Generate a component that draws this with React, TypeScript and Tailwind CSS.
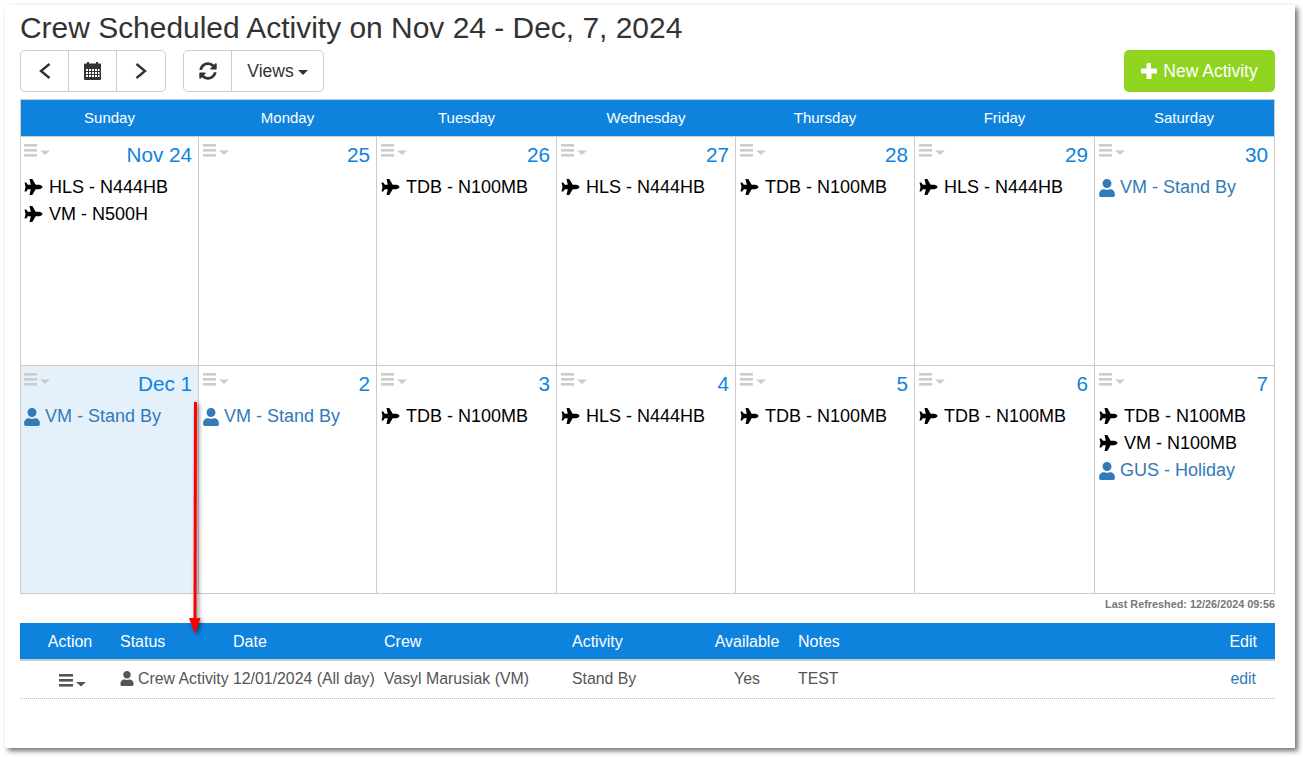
import { FaUser, FaSyncAlt } from 'react-icons/fa';

type CalEvent = { label: string; kind: 'flight' | 'crew' };

interface Day {
    date: string;
    events: CalEvent[];
    today?: boolean;
}

const f = (label: string): CalEvent => ({ label, kind: 'flight' });
const c = (label: string): CalEvent => ({ label, kind: 'crew' });

const weekDays = ['Sunday', 'Monday', 'Tuesday', 'Wednesday', 'Thursday', 'Friday', 'Saturday'];

const days: Day[] = [
    { date: 'Nov 24', events: [f('HLS - N444HB'), f('VM - N500H')] },
    { date: '25', events: [] },
    { date: '26', events: [f('TDB - N100MB')] },
    { date: '27', events: [f('HLS - N444HB')] },
    { date: '28', events: [f('TDB - N100MB')] },
    { date: '29', events: [f('HLS - N444HB')] },
    { date: '30', events: [c('VM - Stand By')] },
    { date: 'Dec 1', events: [c('VM - Stand By')], today: true },
    { date: '2', events: [c('VM - Stand By')] },
    { date: '3', events: [f('TDB - N100MB')] },
    { date: '4', events: [f('HLS - N444HB')] },
    { date: '5', events: [f('TDB - N100MB')] },
    { date: '6', events: [f('TDB - N100MB')] },
    { date: '7', events: [f('TDB - N100MB'), f('VM - N100MB'), c('GUS - Holiday')] },
];

function MenuIcon({ className, large }: { className: string; large?: boolean }) {
    const w = large ? 19 : 17;
    return (
        <svg width={w + 11} height="14" viewBox={`0 0 ${w + 11} 14`} className={className} fill="currentColor">
            <rect x="0" y="0" width={large ? 14 : 13} height="2.6" />
            <rect x="0" y="5" width={large ? 14 : 13} height="2.6" />
            <rect x="0" y="10" width={large ? 14 : 13} height="2.6" />
            <polygon points={large ? '17,8 27,8 22,12.5' : '16,6.5 26,6.5 21,11'} />
        </svg>
    );
}

function PlaneIcon() {
    return (
        <svg width="19" height="16" viewBox="0 0 18 16" className="mb-[1px] shrink-0" fill="currentColor">
            <path d="M18 8C18 6.800 16 5.800 14.500 5.800H11.200L7.800 0H5L6.300 5.800H3.400L1.700 3.600H0L1 8L0 12.400H1.700L3.400 10.200H6.300L5 16H7.800L11.200 10.200H14.500C16 10.200 18 9.200 18 8Z" />
        </svg>
    );
}

function CalendarIcon() {
    return (
        <svg width="17" height="18" viewBox="0 0 17 18">
            <path fill="#333" d="M3 0h2v1.5h7V0h2v1.5h2a1 1 0 0 1 1 1V17a1 1 0 0 1-1 1H1a1 1 0 0 1-1-1V2.500a1 1 0 0 1 1-1h2Z" />
            <g fill="#fff">
                <rect x="2" y="7" width="2" height="2" />
                <rect x="5" y="7" width="2" height="2" />
                <rect x="8" y="7" width="2" height="2" />
                <rect x="11" y="7" width="2" height="2" />
                <rect x="14" y="7" width="1.500" height="2" />
                <rect x="2" y="10" width="2" height="2" />
                <rect x="5" y="10" width="2" height="2" />
                <rect x="8" y="10" width="2" height="2" />
                <rect x="11" y="10" width="2" height="2" />
                <rect x="14" y="10" width="1.500" height="2" />
                <rect x="2" y="13" width="2" height="2" />
                <rect x="5" y="13" width="2" height="2" />
                <rect x="8" y="13" width="2" height="2" />
                <rect x="11" y="13" width="2" height="2" />
                <rect x="14" y="13" width="1.500" height="2" />
            </g>
        </svg>
    );
}

function DayCell({ day, col, row }: { day: Day; col: number; row: number }) {
    return (
        <div className={`border-b border-[#ccc] pr-[6px] pt-[7px] ${row === 0 ? 'h-[229px]' : 'h-[228px]'} ${col === 0 ? 'pl-[3px]' : 'pl-[4px]'} ${col < 6 ? 'border-r' : ''} ${day.today ? 'bg-[#e4f1fb]' : 'bg-white'}`}>
            <div className="flex h-[30px] items-start justify-between">
                <MenuIcon className="text-[#cccccc]" />
                <span className="text-[20.7px] leading-[22px] text-[#0e83de]">{day.date}</span>
            </div>
            {day.events.map((event) =>
                event.kind === 'flight' ? (
                    <div key={event.label} className="flex h-[27px] items-center gap-[6px] text-[18px] text-black">
                        <PlaneIcon />
                        <span>{event.label}</span>
                    </div>
                ) : (
                    <div key={event.label} className="flex h-[27px] items-center gap-[5px] text-[18px] text-[#337ab7]">
                        <FaUser className="h-[18px] w-[16px] shrink-0" />
                        <span>{event.label}</span>
                    </div>
                )
            )}
        </div>
    );
}

export default function App() {
    return (
        <div className="h-[757px] w-[1303px] overflow-hidden bg-white pl-[5px] pt-[5px] font-['Liberation_Sans',Arial,sans-serif] text-[#333]">
            <div className="relative h-[743px] w-[1290px] bg-white pl-[15px] pr-[20px] pt-[6px] shadow-[3px_3px_5px_rgba(0,0,0,0.55)]">
                <h1 className="text-[29.95px] leading-[33px] font-normal">Crew Scheduled Activity on Nov 24 - Dec, 7, 2024</h1>

                <div className="mt-[6px] flex items-start justify-between">
                    <div className="flex gap-[17px]">
                        <div className="flex h-[42px] rounded-[5px] border border-[#ccc]">
                            <button className="flex w-[48px] items-center justify-center border-r border-[#ccc]">
                                <svg width="12" height="16" viewBox="0 0 12 16" fill="none" stroke="#333" strokeWidth="2.4">
                                    <polyline points="10.500,1 2,8 10.500,15" />
                                </svg>
                            </button>
                            <button className="flex w-[48px] items-center justify-center border-r border-[#ccc]">
                                <CalendarIcon />
                            </button>
                            <button className="flex w-[48px] items-center justify-center">
                                <svg width="12" height="16" viewBox="0 0 12 16" fill="none" stroke="#333" strokeWidth="2.4">
                                    <polyline points="1.500,1 10,8 1.500,15" />
                                </svg>
                            </button>
                        </div>
                        <div className="flex h-[42px] rounded-[5px] border border-[#ccc]">
                            <button className="flex w-[48px] items-center justify-center border-r border-[#ccc]">
                                <FaSyncAlt className="h-[18px] w-[18px]" />
                            </button>
                            <button className="flex w-[91px] items-center justify-center gap-[4px] text-[17.5px]">
                                Views
                                <span className="mt-[2px] border-x-[5px] border-t-[5px] border-x-transparent border-t-[#333]" />
                            </button>
                        </div>
                    </div>
                    <button className="flex h-[42px] w-[151px] items-center justify-center gap-[6px] rounded-[5px] bg-[#8fd41f] text-[17.5px] text-white">
                        <svg width="16" height="16" viewBox="0 0 16 16" fill="currentColor">
                            <path d="M6 0.500a.5.5 0 0 1 .5-.5h3a.5.5 0 0 1 .5.5V5.500h5.500a.5.5 0 0 1 .5.5v4a.5.5 0 0 1-.5.5H10.500V15.500a.5.5 0 0 1-.5.5H6a.5.5 0 0 1-.5-.5V10.500H.5A.5.5 0 0 1 0 10V6a.5.5 0 0 1 .5-.5H5.500V.5Z" />
                        </svg>
                        New Activity
                    </button>
                </div>

                <div className="mt-[7px] w-[1255px] border-x border-[#ccc]">
                    <div className="grid h-[38px] grid-cols-[178px_178px_180px_179px_179px_180px_1fr] border-y border-[#ccc] bg-[#0e83de] text-center text-[15px] leading-[36px] text-white">
                        {weekDays.map((name) => (
                            <div key={name} className="pr-[1px]">{name}</div>
                        ))}
                    </div>
                    <div className="grid grid-cols-[178px_178px_180px_179px_179px_180px_1fr]">
                        {days.map((day, i) => (
                            <DayCell key={day.date} day={day} col={i % 7} row={i < 7 ? 0 : 1} />
                        ))}
                    </div>
                </div>

                <div className="mt-[4px] text-right text-[10.85px] leading-[12px] font-bold text-[#777]">Last Refreshed: 12/26/2024 09:56</div>

                <div className="mt-[13px] grid h-[38px] grid-cols-[100px_113px_151px_188px_134px_82px_400px_1fr] items-center border-b-2 border-[#ccc] bg-[#0e83de] pt-[2px] text-[16px] text-white">
                    <div className="text-center">Action</div>
                    <div>Status</div>
                    <div>Date</div>
                    <div>Crew</div>
                    <div>Activity</div>
                    <div className="text-center">Available</div>
                    <div className="pl-[10px]">Notes</div>
                    <div className="pr-[18px] text-right">Edit</div>
                </div>
                <div className="grid h-[38px] grid-cols-[100px_113px_151px_188px_134px_82px_400px_1fr] items-center border-b border-dotted border-[#bbb] pb-[2px] text-[15.85px] text-[#555]">
                    <div className="flex justify-center pl-[7px] pt-[4px]">
                        <MenuIcon className="text-[#555]" large />
                    </div>
                    <div className="flex items-center gap-[4px] whitespace-nowrap">
                        <FaUser className="h-[15px] w-[14px] shrink-0" />
                        Crew Activity
                    </div>
                    <div className="whitespace-nowrap">12/01/2024 (All day)</div>
                    <div>Vasyl Marusiak (VM)</div>
                    <div>Stand By</div>
                    <div className="text-center">Yes</div>
                    <div className="pl-[10px]">TEST</div>
                    <div className="pr-[19px] text-right text-[#337ab7]">edit</div>
                </div>

                {/* red annotation arrow drawn over the calendar */}
                <svg className="absolute left-[180px] top-[390px] h-[260px] w-[30px] drop-shadow-[2px_2px_2px_rgba(0,0,0,0.5)]" viewBox="0 0 30 260">
                    <line x1="10.500" y1="7" x2="10" y2="230" stroke="#f00" strokeWidth="3" />
                    <polygon points="4,223 15.500,223 10,239" fill="#f00" />
                </svg>
            </div>
        </div>
    );
}
